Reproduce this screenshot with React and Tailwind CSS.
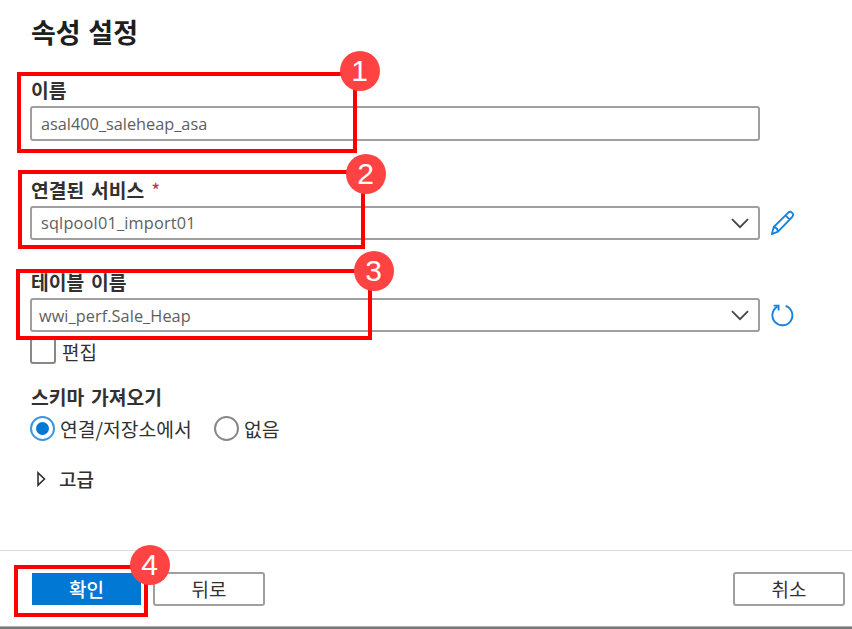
const FONT = "font-['Open_Sans','Noto_Sans_CJK_KR',sans-serif]";
const KR = "font-['Noto_Sans_CJK_KR',sans-serif]";

function Label({ children, className = '' }) {
  return (
    <div className={`${KR} ml-[31px] h-6 whitespace-nowrap text-[19.3px] leading-6 font-bold text-[#323130] [word-spacing:2.5px] ${className}`}>
      {children}
    </div>
  );
}

function Chevron() {
  return (
    <svg className="mr-[9px]" width="18" height="11" viewBox="0 0 18 11" fill="none" stroke="#484644" strokeWidth="1.8">
      <path d="M1 1.2l8 8 8-8" />
    </svg>
  );
}

function Field({ value, className = '', textClass, select }) {
  return (
    <div className={`box-border flex w-[730px] items-center justify-between rounded-[3px] border-2 border-[#a19f9d] bg-white ${className}`}>
      <span className={`${FONT} whitespace-nowrap text-[#605e5c] ${textClass}`}>{value}</span>
      {select && <Chevron />}
    </div>
  );
}

function Badge({ n, className }) {
  return (
    <div className={`absolute flex size-10 items-center justify-center rounded-full bg-[#ff4343] pr-px font-['Liberation_Sans',sans-serif] text-[30px] leading-none text-white ${className}`}>
      <span>{n}</span>
    </div>
  );
}

function Highlight({ className }) {
  return <div className={`pointer-events-none absolute border-4 border-[#ff0000] ${className}`} />;
}

export default function App() {
  return (
    <div className="relative flex h-[629px] w-[852px] flex-col overflow-hidden bg-white">
      <h1 className={`${KR} mt-[15px] ml-[31px] h-[34px] text-[27px] leading-[34px] font-bold whitespace-nowrap text-[#201f1e] [word-spacing:1.5px]`}>속성 설정</h1>

      <Label className="mt-[29px]">이름</Label>
      <div className="mt-1 ml-[30px]">
        <Field value="asal400_saleheap_asa" className="h-[35px]" textClass="mt-[2px] ml-[9px] text-[16.3px]" />
      </div>

      <Label className="mt-[37px]">
        연결된 서비스 <span className="font-normal text-[#c4314b]">*</span>
      </Label>
      <div className="mt-1 ml-[30px] flex items-center">
        <Field select value="sqlpool01_import01" className="h-[34px]" textClass="ml-[9px] text-[16.3px] tracking-[0.2px]" />
        <svg className="ml-[10px]" width="25" height="26" viewBox="0 0 25 26" fill="none" stroke="#1683dc" strokeWidth="1.8" strokeLinejoin="round">
          <path d="M1.8 24.2l1.9-7.2L18 2.8c1.4-1.4 3-1.2 4.2 0s1.2 2.8 0 4.2L8 21.6zM3.7 17c2.4.5 3.9 2 4.3 4.6M15.5 5.3l4.3 4.4M2.3 22.3l1.6 1.5" />
        </svg>
      </div>

      <Label className="mt-[30px]">테이블 이름</Label>
      <div className="mt-1 ml-[30px] flex items-center">
        <Field select value="wwi_perf.Sale_Heap" className="h-[34px]" textClass="mt-[2px] ml-[7px] text-[16.3px] tracking-[0.07px]" />
        <svg className="ml-[10px]" width="25" height="26" viewBox="0 0 25 26" fill="none" stroke="#1683dc" strokeWidth="1.9">
          <path d="M7.4 4.6A10 10 0 1 0 15.6 3.8" />
          <path d="M3.6 3.6h5v5" />
        </svg>
      </div>

      <div className={`${KR} mt-[6px] ml-[30px] flex h-[26px] items-center text-[19px] text-[#323130]`}>
        <span className="size-[26px] rounded-[3px] border-2 border-[#8a8886]" />
        <span className="mt-px ml-[6px] leading-6">편집</span>
      </div>

      <Label className="mt-[21px]">스키마 가져오기</Label>
      <div className={`${KR} mt-[7px] ml-[30px] flex h-[25px] items-center text-[19.3px] leading-6 whitespace-nowrap text-[#323130]`}>
        <span className="flex size-[25px] items-center justify-center rounded-full border-2 border-[#3c96e2]">
          <span className="size-[13px] rounded-full bg-[#0078d4]" />
        </span>
        <span className="mt-px ml-[5px] w-[134px]">연결/저장소에서</span>
        <span className="ml-5 size-[25px] rounded-full border-2 border-[#8a8886]" />
        <span className="mt-px ml-[5px]">없음</span>
      </div>

      <div className={`${KR} mt-[26px] ml-[37px] flex h-6 items-center text-[19px] leading-6 font-medium text-[#323130]`}>
        <svg width="9" height="16" viewBox="0 0 9 16" fill="none" stroke="#323130" strokeWidth="1.6">
          <path d="M1 1.8v12.4L7.5 8z" />
        </svg>
        <span className="ml-[13px]">고급</span>
      </div>

      <div className={`${KR} mt-[59px] flex h-[76px] border-t border-[#dcdcdc] pt-[21px] text-[19px] leading-[32px] text-[#323130]`}>
        <button className="mt-px ml-[32px] h-8 w-[109px] bg-[#0078d4] font-medium text-white">확인</button>
        <button className="ml-3 h-[34px] w-[112px] rounded-[3px] border-2 border-[#a19f9d] leading-[30px]">뒤로</button>
        <button className="mr-[7px] ml-auto h-[34px] w-[112px] rounded-[3px] border-2 border-[#a19f9d] leading-[30px]">취소</button>
      </div>
      <div className="h-[3px] border-t border-[#b0b0b0] bg-[#777777]" />

      <Highlight className="top-[72px] left-[17px] h-[81px] w-[340px]" />
      <Highlight className="top-[170px] left-[18px] h-[79px] w-[347px]" />
      <Highlight className="top-[269px] left-[16px] h-[71px] w-[356px]" />
      <Highlight className="top-[565px] left-[14px] h-[52px] w-[134px]" />
      <Badge n="1" className="top-[51px] left-[340px]" />
      <Badge n="2" className="top-[154px] left-[346px]" />
      <Badge n="3" className="top-[251px] left-[354px]" />
      <Badge n="4" className="top-[545px] left-[130px]" />
    </div>
  );
}
